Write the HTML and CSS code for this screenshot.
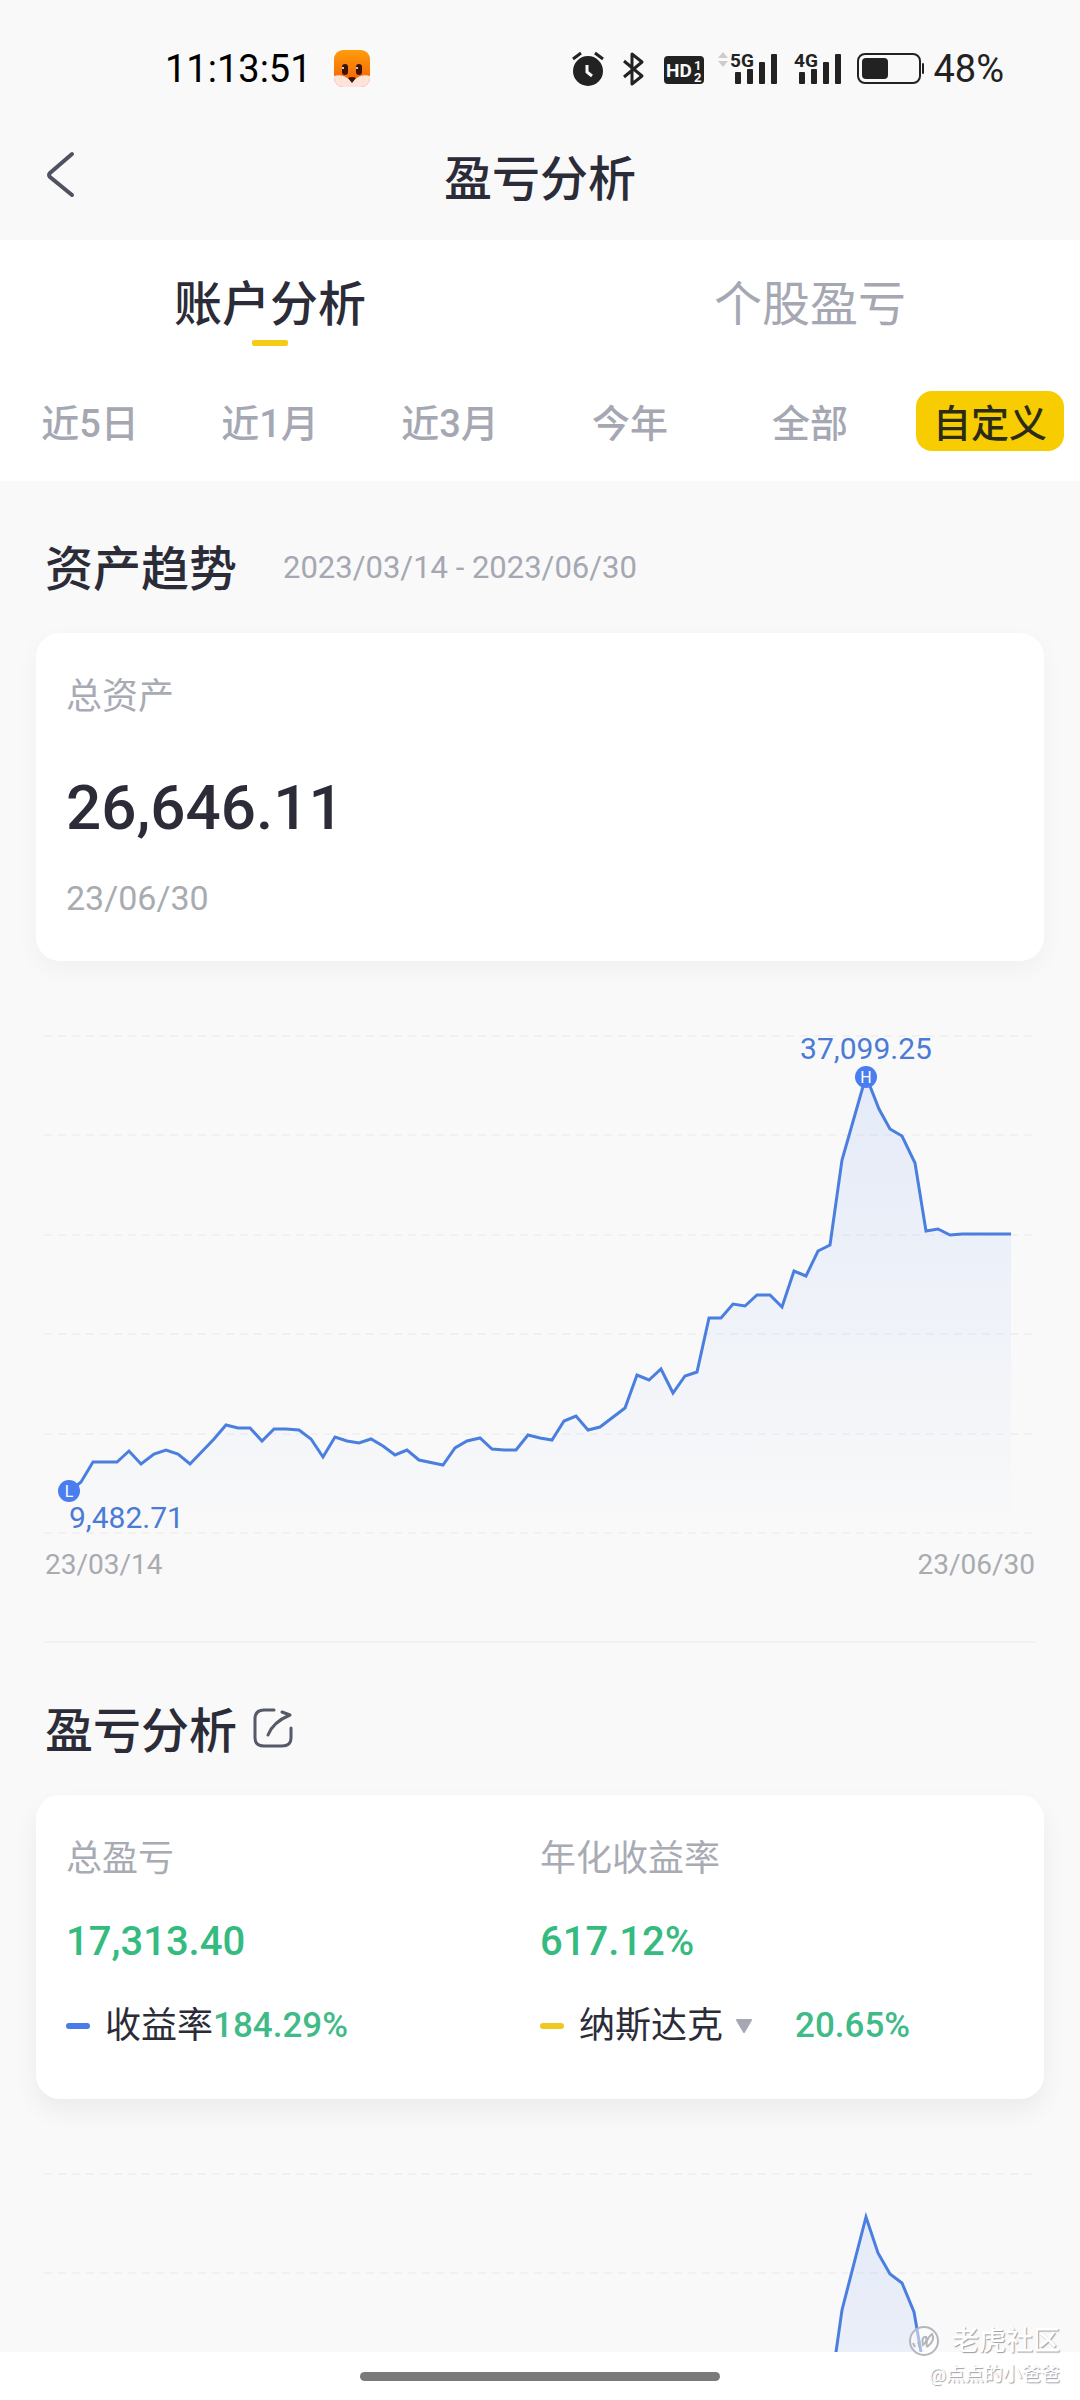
FILE: index.html
```html
<!DOCTYPE html>
<html lang="zh-CN">
<head>
    <meta charset="UTF-8">
    <meta name="viewport" content="width=device-width, initial-scale=1.0">
    <title>盈亏分析</title>
    <link rel="stylesheet" href="styles.css">
</head>
<body>
  <div class="status-bar">
    <div class="status-left">
      <span class="time">11:13:51</span>
      <svg width="36" height="38" viewBox="0 0 36 38">
        <defs>
          <linearGradient id="fox" x1="0" y1="0" x2="0" y2="1">
            <stop offset="0" stop-color="#ff9d0a"/>
            <stop offset="1" stop-color="#f25a05"/>
          </linearGradient>
          <clipPath id="foxClip"><rect width="36" height="37" rx="9"/></clipPath>
        </defs>
        <g clip-path="url(#foxClip)">
          <rect width="36" height="37" fill="url(#fox)"/>
          <path d="M0 26C7 24 13 27 18 32C23 27 29 24 36 26V37H0Z" fill="#fde3d8"/>
        </g>
        <rect x="8" y="14" width="6" height="11" rx="3" fill="#3a1306"/>
        <rect x="22" y="14" width="6" height="11" rx="3" fill="#3a1306"/>
        <circle cx="9" cy="18" r="1" fill="#fff"/>
        <circle cx="23" cy="18" r="1" fill="#fff"/>
        <path d="M14 28Q18 26 22 28L18 33Z" fill="#3a1306"/>
      </svg>
    </div>
    <div class="status-right">
      <!-- alarm -->
      <svg width="35" height="36" viewBox="0 0 35 36">
        <circle cx="16" cy="20" r="15" fill="#222"/>
        <path d="M1 8L9 2M31 8L23 2" stroke="#222" stroke-width="3"/>
        <path d="M15 14V21L20 25" stroke="#f9f9f9" stroke-width="3" fill="none"/>
      </svg>
      <!-- bluetooth -->
      <svg width="28" height="36" viewBox="0 0 28 36">
        <path d="M3 10L21 25L11 33V3L21 11L3 26" stroke="#222" stroke-width="3" fill="none" stroke-linejoin="round"/>
      </svg>
      <!-- HD -->
      <svg width="41" height="36" viewBox="0 0 41 36">
        <rect x="1" y="5" width="40" height="28" rx="4" fill="#222"/>
        <text x="3" y="26" class="hd-text">HD</text>
        <text x="31" y="19" class="hd-num">1</text>
        <text x="31" y="31" class="hd-num">2</text>
      </svg>
      <!-- 5G signal -->
      <svg width="60" height="36" viewBox="0 0 60 36">
        <path d="M5 1L10 7H0ZM5 16L10 10H0Z" fill="#ccc"/>
        <text x="12" y="16" class="net-text">5G</text>
        <g fill="#222">
          <rect x="17" y="21" width="6" height="12" rx="1"/>
          <rect x="29" y="18" width="6" height="15" rx="1"/>
          <rect x="41" y="11" width="6" height="22" rx="1"/>
          <rect x="53" y="3" width="6" height="30" rx="1"/>
        </g>
      </svg>
      <!-- 4G signal -->
      <svg width="50" height="36" viewBox="0 0 50 36">
        <text x="2" y="16" class="net-text">4G</text>
        <g fill="#222">
          <rect x="7" y="21" width="6" height="12" rx="1"/>
          <rect x="19" y="18" width="6" height="15" rx="1"/>
          <rect x="31" y="11" width="6" height="22" rx="1"/>
          <rect x="43" y="3" width="6" height="30" rx="1"/>
        </g>
      </svg>
      <span class="battery">
        <svg width="69" height="36" viewBox="0 0 69 36">
          <rect x="2" y="3" width="62" height="29" rx="7" fill="none" stroke="#222" stroke-width="2"/>
          <rect x="6" y="7" width="26" height="21" rx="4" fill="#222"/>
          <rect x="66" y="12" width="2" height="11" rx="1" fill="#222"/>
        </svg>
        48%
      </span>
    </div>
  </div>

  <header class="nav">
    <button type="button" class="back" aria-label="返回">
      <svg width="30" height="48" viewBox="0 0 30 48">
        <path d="M26 3L4 22Q2 24 4 26L26 44" fill="none" stroke="#4f5260" stroke-width="4" stroke-linecap="round"/>
      </svg>
    </button>
    <h1>盈亏分析</h1>
  </header>

  <main>
    <div class="filters">
      <nav class="tabs">
        <button type="button" class="tab active">账户分析</button>
        <button type="button" class="tab">个股盈亏</button>
      </nav>
      <div class="ranges">
        <button type="button" class="range">近5日</button>
        <button type="button" class="range">近1月</button>
        <button type="button" class="range">近3月</button>
        <button type="button" class="range">今年</button>
        <button type="button" class="range">全部</button>
        <button type="button" class="range active">自定义</button>
      </div>
    </div>

    <section class="trend">
      <div class="section-title">
        <h2>资产趋势</h2>
        <span class="period">2023/03/14 - 2023/06/30</span>
      </div>
      <div class="card asset">
        <div class="label">总资产</div>
        <div class="total">26,646.11</div>
        <div class="date">23/06/30</div>
      </div>
      <div class="chart">
        <svg viewBox="0 0 992 501">
          <defs>
            <linearGradient id="area" gradientUnits="userSpaceOnUse" x1="0" y1="40" x2="0" y2="499">
              <stop offset="0" stop-color="#4a80f0" stop-opacity="0.12"/>
              <stop offset="1" stop-color="#4a80f0" stop-opacity="0"/>
            </linearGradient>
          </defs>
          <path class="grid" d="M0 2H992M0 101H992M0 201H992M0 300H992M0 400H992M0 499H992"/>
          <polygon fill="url(#area)" points="25,458 37,448 49,428 73,428 85,417 97,430 110,420 122,416 134,420 146,430 170,405 182,391 194,394 206,394 218,407 230,395 242,395 255,396 267,405 279,423 291,403 303,407 315,409 327,405 339,412 351,421 363,416 375,426 399,431 411,414 423,407 436,404 448,415 460,416 472,416 484,401 496,404 508,406 520,387 532,382 544,396 556,393 581,374 593,341 605,346 617,335 629,359 641,342 653,338 665,284 677,284 689,270 701,272 713,261 726,261 738,273 750,237 762,242 774,217 786,211 798,126 822,42 835,75 846,95 858,102 871,129 882,197 894,195 906,201 918,200 967,200 967,499 25,499"/>
          <polyline class="line" points="25,458 37,448 49,428 73,428 85,417 97,430 110,420 122,416 134,420 146,430 170,405 182,391 194,394 206,394 218,407 230,395 242,395 255,396 267,405 279,423 291,403 303,407 315,409 327,405 339,412 351,421 363,416 375,426 399,431 411,414 423,407 436,404 448,415 460,416 472,416 484,401 496,404 508,406 520,387 532,382 544,396 556,393 581,374 593,341 605,346 617,335 629,359 641,342 653,338 665,284 677,284 689,270 701,272 713,261 726,261 738,273 750,237 762,242 774,217 786,211 798,126 822,42 835,75 846,95 858,102 871,129 882,197 894,195 906,201 918,200 967,200"/>
          <circle cx="25" cy="457" r="11" class="dot"/>
          <text x="25" y="463" class="dot-text">L</text>
          <text x="25" y="494" class="value">9,482.71</text>
          <circle cx="822" cy="43" r="11" class="dot"/>
          <text x="822" y="49" class="dot-text">H</text>
          <text x="822" y="25" class="value high">37,099.25</text>
        </svg>
        <div class="axis">
          <span>23/03/14</span>
          <span>23/06/30</span>
        </div>
      </div>
    </section>

    <section class="profit">
      <div class="section-title">
        <h2>盈亏分析</h2>
        <button type="button" class="share" aria-label="分享">
          <svg width="42" height="42" viewBox="0 0 42 42">
            <path d="M22 2H12Q3 2 3 11V30Q3 38 12 38H30Q39 38 39 30V20" fill="none" stroke="#565967" stroke-width="3" stroke-linecap="round"/>
            <path d="M16 27Q21 14 38 7M30 4L38 7L32 10" fill="none" stroke="#565967" stroke-width="3" stroke-linecap="round" stroke-linejoin="round"/>
          </svg>
        </button>
      </div>
      <div class="card summary">
        <div class="column">
          <div class="label">总盈亏</div>
          <div class="amount">17,313.40</div>
          <div class="legend">
            <i class="mark blue"></i>
            <span class="name">收益率</span>
            <span class="rate">184.29%</span>
          </div>
        </div>
        <div class="column">
          <div class="label">年化收益率</div>
          <div class="amount">617.12%</div>
          <div class="legend">
            <i class="mark yellow"></i>
            <select class="name" aria-label="对比指数">
              <option>纳斯达克</option>
            </select>
            <svg class="arrow" width="18" height="16" viewBox="0 0 18 16">
              <path d="M2 2H16L9 14Z" fill="#a5a8b4" stroke="#a5a8b4" stroke-width="2" stroke-linejoin="round"/>
            </svg>
            <span class="rate">20.65%</span>
          </div>
        </div>
      </div>
      <div class="chart">
        <svg viewBox="0 0 992 501">
          <path class="grid" d="M0 2H992M0 101H992"/>
          <polygon fill="url(#area)" points="786,224 792,180 798,138 822,45 834,81 846,102 858,111 870,140 877,180 882,208"/>
          <polyline class="line" points="786,224 792,180 798,138 822,45 834,81 846,102 858,111 870,140 877,180 882,208"/>
        </svg>
      </div>
    </section>
  </main>

  <footer class="home-bar"><span></span></footer>

  <div class="watermark">
    <div class="brand">
      <svg width="32" height="32" viewBox="0 0 32 32">
        <circle cx="16" cy="16" r="14" fill="#fff" fill-opacity="0.5" stroke="#b4b6bd" stroke-width="2"/>
        <path d="M5 18L7 22M10 17L12 23M15 20Q13 11 18 12Q20 16 15 20ZM19 22Q17 15 24 9Q28 15 19 22" fill="none" stroke="#b4b6bd" stroke-width="2"/>
      </svg>
      老虎社区
    </div>
    <div class="user">@点点的小爸爸</div>
  </div>
</body>
</html>
```

FILE: styles.css
```css
* {
  box-sizing: border-box;
  }
body {
  font-family: Roboto, "Noto Sans CJK SC", sans-serif;
  margin: 0;
  height: 100vh;
  display: flex;
  flex-direction: column;
  background-color: #f9f9f9;
  color: #2b2c38;
  position: relative;
  overflow: hidden;
  }
h1, h2 {
  margin: 0;
  padding-top: 6px;
  font-size: 48px;
  line-height: 54px;
  font-weight: 500;
  }
button, select {
  font-family: inherit;
  border: none;
  background: none;
  padding: 0;
  margin: 0;
  color: inherit;
  }
svg {
  display: block;
  overflow: visible;
  }

/* status bar */
.status-bar {
  display: flex;
  justify-content: space-between;
  align-items: center;
  height: 138px;
  padding: 0 76px 0 165px;
  font-size: 38px;
  color: #222;
  flex: none;
  }
.status-left {
  display: flex;
  align-items: center;
  gap: 22px;
  }
.time {
  color: #000;
  }
.status-right {
  display: flex;
  align-items: center;
  gap: 14px;
  }
.battery {
  display: flex;
  align-items: center;
  gap: 8px;
  }
.hd-text {
  font: bold 19px Roboto, sans-serif;
  fill: #f9f9f9;
  }
.hd-num {
  font: bold 13px Roboto, sans-serif;
  fill: #f9f9f9;
  }
.net-text {
  font: bold 19px Roboto, sans-serif;
  fill: #222;
  }

/* title row */
.nav {
  display: grid;
  grid-template-columns: 120px 1fr 120px;
  align-items: center;
  height: 102px;
  padding-bottom: 24px;
  flex: none;
  text-align: center;
  }
.back {
  padding: 0 0 4px 46px;
  }

main {
  flex: 1;
  min-height: 0;
  overflow: hidden;
  }
.filters {
  background-color: #fff;
  padding: 30px 0;
  }
.tabs {
  display: flex;
  }
.tab {
  flex: 1;
  font-size: 48px;
  line-height: 64px;
  padding-top: 3px;
  color: #a5a8b2;
  display: flex;
  flex-direction: column;
  align-items: center;
  }
.tab::after {
  content: "";
  width: 36px;
  height: 6px;
  border-radius: 2px;
  margin-top: 3px;
  }
.tab.active {
  color: #2b2c38;
  font-weight: 500;
  }
.tab.active::after {
  background-color: #f5cb16;
  }
.ranges {
  display: grid;
  grid-template-columns: repeat(6, 1fr);
  justify-items: center;
  margin-top: 45px;
  }
.range {
  font-size: 38px;
  line-height: 54px;
  padding: 6px 17px 0;
  border-radius: 16px;
  color: #a5a8b2;
  font-weight: 500;
  white-space: nowrap;
  }
.range.active {
  background-color: #f7cc00;
  color: #2b2c18;
  }

/* sections */
.section-title {
  display: flex;
  align-items: center;
  padding: 0 45px;
  }
.trend .section-title {
  padding-top: 56px;
  gap: 46px;
  }
.period {
  font-size: 31px;
  color: #a5a8b2;
  }
.card {
  background-color: #fff;
  border-radius: 24px;
  box-shadow: 0 8px 24px rgba(0, 0, 0, 0.04);
  margin: 36px 36px 0;
  padding: 38px 30px 36px;
  }
.label {
  font-size: 36px;
  line-height: 52px;
  color: #a8abb4;
  }
.total {
  font-size: 62px;
  line-height: 80px;
  font-weight: 500;
  margin-top: 45px;
  }
.date {
  font-size: 34px;
  line-height: 40px;
  color: #a8abb0;
  margin-top: 30px;
  padding-bottom: 7px;
  }
.chart {
  margin: 73px 44px 0;
  }
.chart svg {
  width: 100%;
  height: auto;
  }
.grid {
  stroke: #f1f1f2;
  stroke-width: 2;
  stroke-dasharray: 8 6;
  }
.line {
  fill: none;
  stroke: #4a7fdf;
  stroke-width: 3;
  }
.dot {
  fill: #4a7df0;
  }
.dot-text {
  fill: #fff;
  font-size: 16px;
  text-anchor: middle;
  }
.value {
  fill: #4a7bd6;
  font-size: 30px;
  }
.high {
  text-anchor: middle;
  }
.axis {
  display: flex;
  justify-content: space-between;
  font-size: 28px;
  line-height: 36px;
  color: #a8abb0;
  padding: 12px 1px 58px;
  border-bottom: 2px solid #f1f1f2;
  }

/* profit */
.profit .section-title {
  padding-top: 56px;
  gap: 15px;
  }
.summary {
  display: grid;
  grid-template-columns: 1fr 1fr;
  box-shadow: 0 12px 24px rgba(0, 0, 0, 0.06);
  }
.amount {
  font-size: 40px;
  line-height: 50px;
  font-weight: 500;
  color: #35bb80;
  margin-top: 32px;
  }
.legend {
  display: flex;
  align-items: center;
  font-size: 36px;
  line-height: 52px;
  margin-top: 33px;
  padding-bottom: 11px;
  }
.mark {
  width: 24px;
  height: 6px;
  border-radius: 3px;
  margin-right: 15px;
  }
.blue {
  background-color: #4a7bea;
  }
.yellow {
  background-color: #f0c920;
  }
.name {
  font-size: 36px;
  }
select.name {
  appearance: none;
  line-height: 52px;
  }
.arrow {
  margin: 0 42px 0 11px;
  }
.rate {
  font-size: 35px;
  font-weight: 500;
  color: #40bb88;
  }

.home-bar {
  flex: none;
  height: 48px;
  background-color: #fff;
  display: flex;
  justify-content: center;
  align-items: center;
  }
.home-bar span {
  width: 33.4%;
  height: 9px;
  border-radius: 5px;
  background-color: #7a7a7a;
  }

/* watermark over the page corner */
.watermark {
  position: absolute;
  right: 20px;
  bottom: 9px;
  color: #fff;
  text-align: right;
  text-shadow: 1px 1px 1px #999ca6;
  }
.brand {
  display: flex;
  align-items: center;
  justify-content: flex-end;
  gap: 12px;
  font-size: 27px;
  line-height: 36px;
  font-weight: 500;
  }
.user {
  font-size: 19px;
  line-height: 32px;
  }
```
